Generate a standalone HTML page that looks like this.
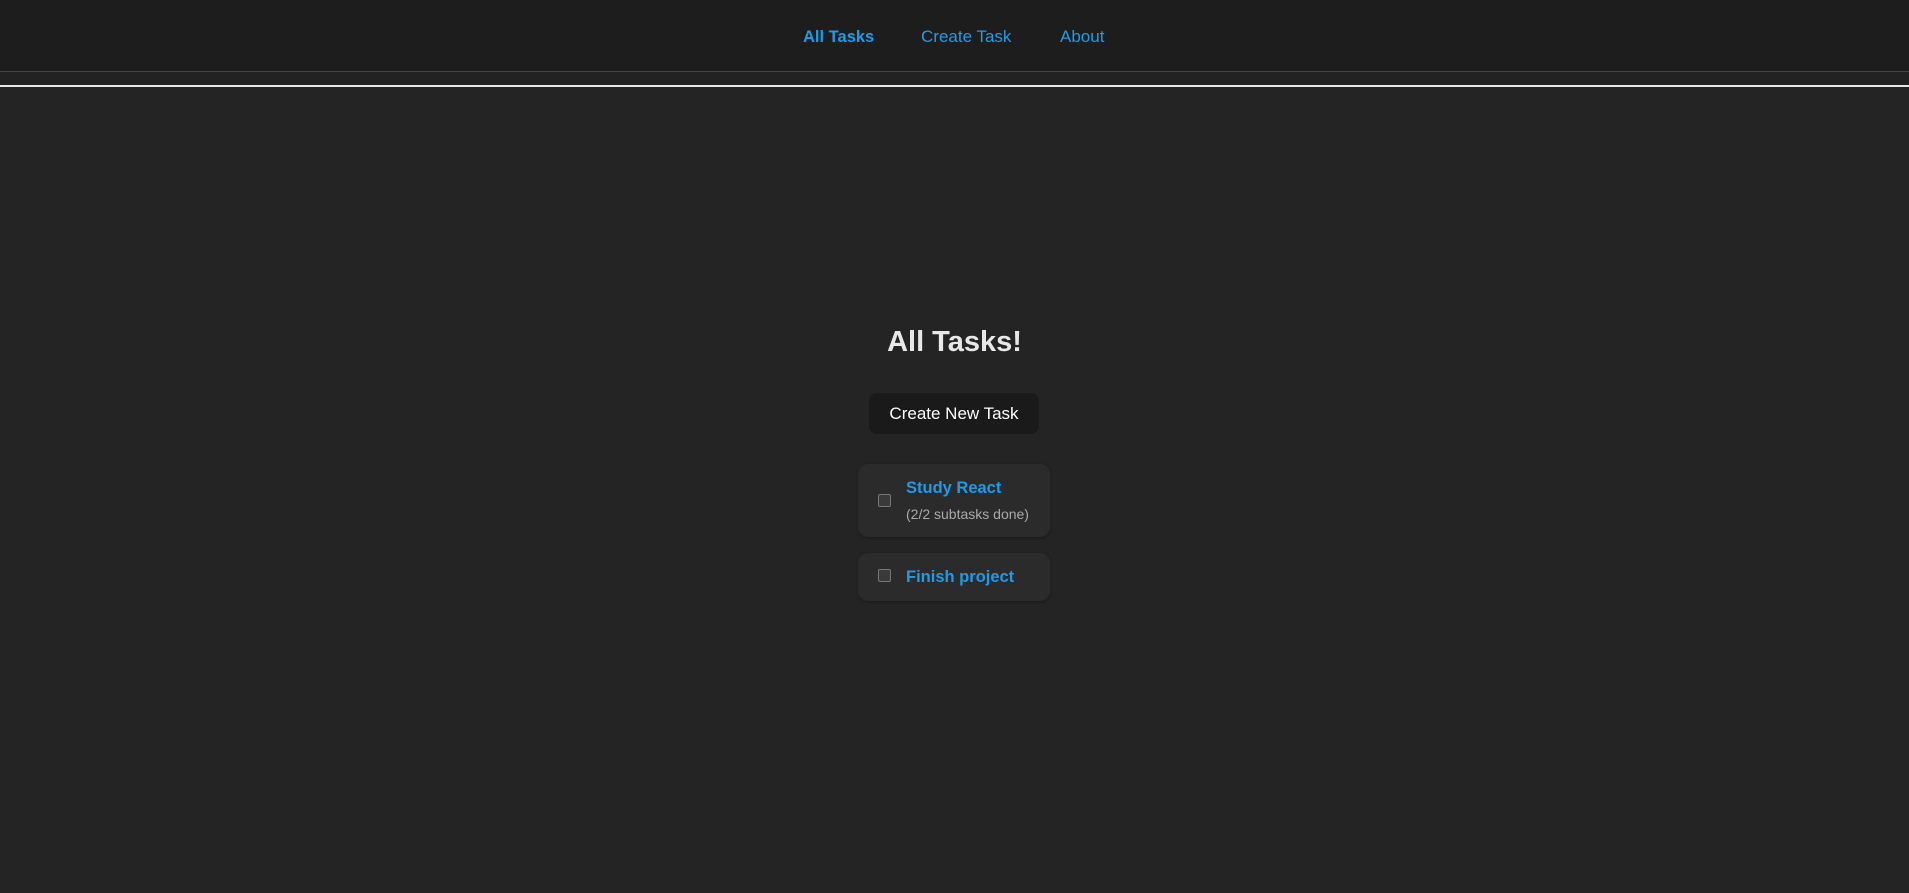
<!DOCTYPE html>
<html><head><style>
html,body{margin:0;padding:0;}
body{width:1909px;height:893px;background:#242424;font-family:"Liberation Sans",sans-serif;position:relative;overflow:hidden;}
.nav{position:absolute;left:0;top:0;width:1909px;height:71px;background:#1d1d1d;border-bottom:1px solid #444;}
.nav a{position:absolute;top:27px;color:#1e9be9;font-size:17px;text-decoration:none;}
.band{position:absolute;top:72px;left:0;width:1909px;height:13px;background:#222;}
.wl{position:absolute;top:85px;left:0;width:1909px;height:2px;background:#e8e8e8;}
h1{position:absolute;top:326px;left:0;width:1909px;text-align:center;margin:0;font-size:29px;color:#e8e8e8;font-weight:bold;}
.btn{position:absolute;left:869px;top:393px;width:170px;height:41px;background:#1a1a1a;border-radius:8px;color:#fff;font-size:17px;line-height:41px;text-align:center;}
.card{position:absolute;left:858px;width:192px;background:#2b2b2b;border-radius:10px;box-shadow:0 1px 3px rgba(0,0,0,.3);}
.cb{position:absolute;left:20px;width:11px;height:11px;border:1px solid #777;border-radius:2px;background:#3a3a3a;}
.t{position:absolute;left:48px;color:#1e9be9;font-weight:bold;font-size:16.5px;}
.s{position:absolute;left:48px;color:#aaa;font-size:14px;}
</style></head><body>
<div class="nav">
<a style="left:803px;font-weight:bold;font-size:16.5px;top:28px">All Tasks</a>
<a style="left:921px">Create Task</a>
<a style="left:1060px">About</a>
</div>
<div class="band"></div><div class="wl"></div>
<h1>All Tasks!</h1>
<div class="btn">Create New Task</div>
<div class="card" style="top:464px;height:73px">
<div class="cb" style="top:30px"></div>
<div class="t" style="top:15px">Study React</div>
<div class="s" style="top:42px">(2/2 subtasks done)</div>
</div>
<div class="card" style="top:553px;height:48px">
<div class="cb" style="top:16px"></div>
<div class="t" style="top:15px">Finish project</div>
</div>
</body></html>
